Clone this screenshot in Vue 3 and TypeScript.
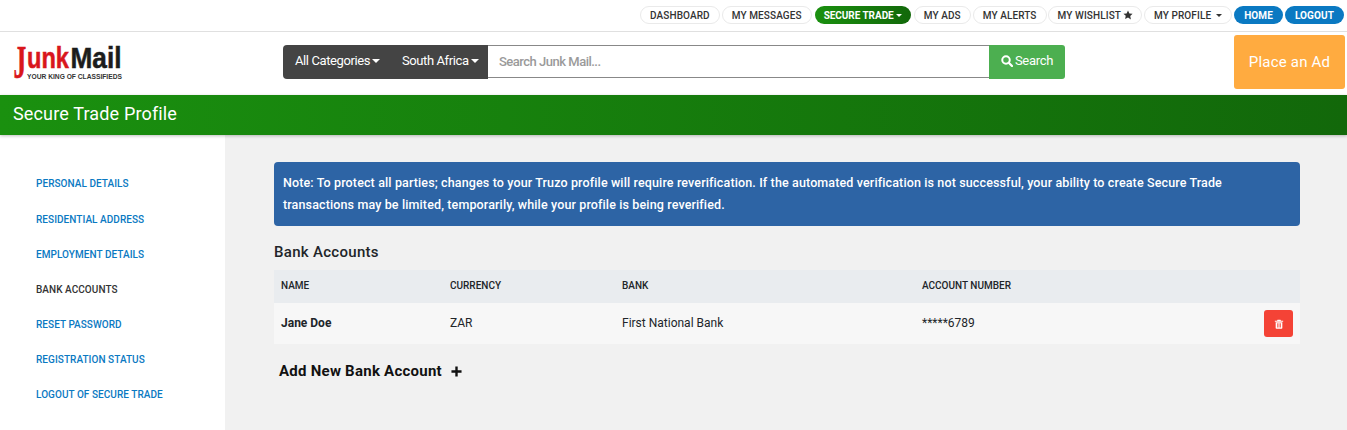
<script setup lang="ts">
interface NavItem { label: string; kind?: string; caret?: boolean; star?: boolean }
const nav: NavItem[] = [
  { label: 'DASHBOARD' },
  { label: 'MY MESSAGES' },
  { label: 'SECURE TRADE', kind: 'green', caret: true },
  { label: 'MY ADS' },
  { label: 'MY ALERTS' },
  { label: 'MY WISHLIST', star: true, kind: 'wish' },
  { label: 'MY PROFILE', caret: true, kind: 'profile' },
  { label: 'HOME', kind: 'blue' },
  { label: 'LOGOUT', kind: 'blue' },
]
const side: string[] = ['PERSONAL DETAILS', 'RESIDENTIAL ADDRESS', 'EMPLOYMENT DETAILS', 'BANK ACCOUNTS', 'RESET PASSWORD', 'REGISTRATION STATUS', 'LOGOUT OF SECURE TRADE']
</script>

<template>
  <div class="page">
    <nav class="topnav">
      <a v-for="n in nav" :key="n.label" class="pill" :class="n.kind">
        {{ n.label }}
        <svg v-if="n.star" class="star" viewBox="0 0 24 24" width="10" height="10"><path fill="#333" d="M12 1l3.400 7.200 7.600 1-5.600 5.400 1.500 7.900L12 17.700l-6.900 3.800 1.500-7.900L1 9.200l7.600-1z"/></svg>
        <i v-if="n.caret" class="caret"></i>
      </a>
    </nav>

    <header class="head">
      <div class="logo">
        <svg width="112" height="40" viewBox="0 0 112 40" class="logosvg">
          <text transform="translate(0.5 33) scale(.54 1)" class="lgj" font-size="47" fill="#d9161c" stroke="#d9161c" stroke-width=".7">J</text>
          <text transform="translate(14 23) scale(.815 1)" class="lg" font-size="29" fill="#d9161c" stroke="#d9161c" stroke-width=".5">unk</text>
          <text transform="translate(57.5 23) scale(.905 1)" class="lg" font-size="29" fill="#1c1c1c" stroke="#1c1c1c" stroke-width=".5">Mail</text>
          <text transform="translate(14 34) scale(1.03 1)" class="lg" font-size="6.500" fill="#333">YOUR KING OF CLASSIFIEDS</text>
        </svg>
      </div>
      <div class="search">
        <div class="drops">
          <span class="drop">All Categories<i class="caret"></i></span>
          <span class="drop">South Africa<i class="caret"></i></span>
        </div>
        <div class="field">Search Junk Mail...</div>
        <button class="go">
          <svg viewBox="0 0 24 24" width="12" height="12"><circle cx="10" cy="10" r="7.500" fill="none" stroke="#fff" stroke-width="4"/><path d="M15.500 15.500L22 22" stroke="#fff" stroke-width="4.500" stroke-linecap="round"/></svg>
          Search
        </button>
      </div>
      <a class="place">Place an Ad</a>
    </header>

    <div class="banner">Secure Trade Profile</div>

    <div class="body">
      <aside class="side">
        <a v-for="s in side" :key="s" class="link" :class="{ active: s === 'BANK ACCOUNTS' }">{{ s }}</a>
      </aside>
      <main class="main">
        <div class="note">Note: To protect all parties; changes to your Truzo profile will require reverification. If the automated verification is not successful, your ability to create Secure Trade transactions may be limited, temporarily, while your profile is being reverified.</div>
        <h2 class="title">Bank Accounts</h2>
        <div class="table">
          <div class="row hdr">
            <span>NAME</span><span>CURRENCY</span><span>BANK</span><span>ACCOUNT NUMBER</span><span></span>
          </div>
          <div class="row data">
            <span class="name">Jane Doe</span><span>ZAR</span><span>First National Bank</span><span>*****6789</span>
            <span class="act">
              <button class="del">
                <svg viewBox="0 0 12 12" width="10" height="10"><path fill="#fff" fill-rule="evenodd" d="M4.200.8h3.600l.6 1.200H11v1.200H1V2h2.600zM2 4h8v6.800q0 .9-.9.9H2.900q-.9 0-.9-.9zM4 5.200v5h.9v-5zM5.600 5.200v5h.9v-5zM7.200 5.200v5h.9v-5z"/></svg>
              </button>
            </span>
          </div>
        </div>
        <div class="add">
          Add New Bank Account
          <svg viewBox="0 0 12 12" width="11" height="11"><path d="M6 .500v11M.5 6h11" stroke="#111" stroke-width="2.600"/></svg>
        </div>
      </main>
    </div>
  </div>
</template>

<style>
html, body { margin: 0; padding: 0; background: #fff; }
</style>

<style scoped>
.page { width: 1347px; height: 430px; overflow: hidden; font-family: Roboto, "Liberation Sans", sans-serif; display: flex; flex-direction: column; background: #fff; }
.topnav { height: 32px; flex: none; box-sizing: border-box; border-bottom: 1px solid #e0e0e0; display: flex; justify-content: flex-end; align-items: flex-start; padding: 6px 3px 0 0; gap: 2px; }
.pill { height: 18px; box-sizing: border-box; padding: 0 9px; border: 1px solid #eaeaea; border-radius: 9px; font-size: 10px; font-weight: 500; color: #333; display: flex; align-items: center; gap: 3px; white-space: nowrap; letter-spacing: .1px; }
.pill.green { background: linear-gradient(90deg, #1a900f, #12680a); color: #fff; border: 0; font-weight: 700; padding: 0 9px; letter-spacing: -.05px; gap: 2px; margin: 0 1px; }
.pill.blue { background: #0a79c2; color: #fff; border: 0; font-weight: 700; padding: 0 10px; }
.pill.wish { gap: 2px; padding: 0 8px 0 9px; margin-left: -1px; }
.pill.profile { gap: 5px; }
.caret { display: inline-block; width: 0; height: 0; border-left: 4px solid transparent; border-right: 4px solid transparent; border-top: 4px solid currentColor; margin-left: 2px; }
.pill .caret { border-left-width: 3.500px; border-right-width: 3.500px; border-top-width: 3.500px; margin-left: 0; }
.head { height: 63px; flex: none; display: flex; align-items: flex-start; }
.logo { width: 283px; flex: none; padding: 13px 0 0 13px; box-sizing: border-box; }
.logosvg { display: block; overflow: visible; }
.lg { font-family: "Liberation Sans", sans-serif; font-weight: 700; }
.lgj { font-family: "Liberation Serif", serif; font-weight: 700; }
.search { display: flex; width: 782px; height: 34px; margin-top: 13px; flex: none; }
.drops { background: #444; border-radius: 4px 0 0 4px; display: flex; color: #fff; font-size: 13px; align-items: center; padding: 0 10px 3px 12px; gap: 22px; width: 205px; box-sizing: border-box; white-space: nowrap; letter-spacing: -.4px; }
.drop { display: inline-flex; align-items: center; }
.field { flex: 1; box-sizing: border-box; border-top: 1px solid #888; border-bottom: 1px solid #888; font-size: 13px; font-weight: 500; color: #9a9a9a; padding-left: 11px; display: flex; align-items: center; height: 33px; letter-spacing: -.5px; }
.go { width: 76px; flex: none; background: #4caf50; color: #fff; border: 0; border-radius: 0 3px 3px 0; font: 400 13px Roboto, sans-serif; display: flex; align-items: center; justify-content: center; gap: 2px; padding: 0 0 3px; letter-spacing: -.3px; }
.place { margin: 3px 2px 0 auto; width: 111px; height: 54px; background: #ffab40; color: #fff; border-radius: 3px; font-size: 15px; display: flex; align-items: center; justify-content: center; letter-spacing: .2px; }
.banner { height: 40px; flex: none; background: linear-gradient(90deg, #1a900f, #12680a); color: #fff; font-size: 18px; display: flex; align-items: center; padding: 0 0 3px 13px; box-sizing: border-box; box-shadow: 0 1px 3px rgba(0,0,0,.25); position: relative; letter-spacing: .15px; }
.body { flex: 1; display: flex; min-height: 0; }
.side { width: 225px; flex: none; background: #fff; box-sizing: border-box; padding: 42px 0 0 36px; display: flex; flex-direction: column; gap: 21px; }
.link { font-size: 10px; font-weight: 500; color: #0a79c2; line-height: 14px; height: 14px; white-space: nowrap; letter-spacing: .05px; }
.link:first-child { margin-bottom: 1px; }
.link.active { color: #333; }
.main { flex: 1; background: #f1f1f1; padding: 27px 47px 0 49px; box-sizing: border-box; }
.note { background: #2d64a5; color: #fff; border-radius: 4px; font-size: 12.500px; font-weight: 500; line-height: 22px; padding: 10px 70px 10px 9px; height: 64px; box-sizing: border-box; letter-spacing: .13px; }
.title { margin: 16px 0 0; font-size: 15px; font-weight: 500; color: #212529; line-height: 20px; letter-spacing: .3px; }
.table { margin-top: 8px; }
.row { display: grid; grid-template-columns: 169px 172px 300px 1fr 100px; align-items: center; padding-left: 7px; font-size: 12px; color: #212529; }
.hdr { height: 33px; background: #e9ecef; font-size: 10px; font-weight: 500; padding-bottom: 2px; box-sizing: border-box; }
.data { height: 41px; background: #f7f7f7; }
.data > span:not(.act) { margin-top: -2px; }
.name { font-weight: 700; }
.act { display: flex; justify-content: flex-end; padding-right: 7px; }
.del { width: 29px; height: 27px; background: #f44336; border: 0; border-radius: 3px; display: flex; align-items: center; justify-content: center; padding: 0; }
.add { margin: 18px 0 0 5px; font-size: 15px; font-weight: 700; color: #111; display: flex; align-items: center; gap: 9px; line-height: 18px; letter-spacing: .25px; }
</style>
